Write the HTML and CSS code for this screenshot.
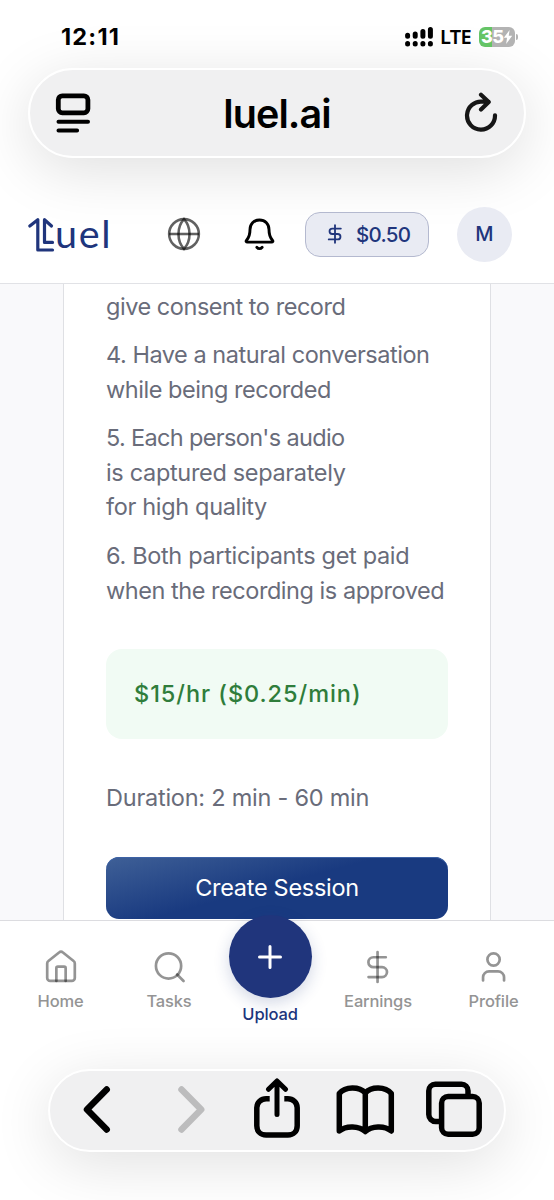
FILE: index.html
```
<!DOCTYPE html>
<html lang="en">
<head>
<meta charset="utf-8">
<title>luel.ai</title>
<link rel="stylesheet" href="styles.css">
</head>
<body>
<div class="screen">
  <div class="status">
    <span class="time">12:11</span>
    <span class="status-right">
      <svg class="signal" width="28" height="20" viewBox="405 27 28 20">
        <g stroke="#000" stroke-width="5" stroke-linecap="round"><path d="M407.6 35.3v1M415.2 34v2.3M422.9 31.6v4.7M430.4 29.5v6.8"/><path d="M407.6 43.4v.6M415.2 43.4v.6M422.9 43.4v.6M430.4 43.4v.6"/></g>
      </svg>
      <span class="lte">LTE</span>
      <span class="battery"><span class="level">35</span><svg width="10" height="14" viewBox="0 0 9 13"><path d="M6 0L.6 7.2h3L2.8 13l5.6-7.6H5.2z" fill="#fff"/></svg></span>
    </span>
  </div>

  <div class="urlbar">
    <svg width="36" height="40" viewBox="55 93 36 40" fill="none" stroke="#000" stroke-linecap="round"><rect x="58.3" y="95.8" width="29.6" height="17" rx="4" stroke-width="4.8"/><path d="M58.500 121.700h29.500M58.500 130.500h18.600" stroke-width="4"/></svg>
    <span class="url">luel.ai</span>
    <svg width="36" height="42" viewBox="463 90 36 42" fill="none" stroke="#161616" stroke-width="4.2" stroke-linecap="round" stroke-linejoin="round"><path d="M495 113.300a14 14 0 1 1-12.500-13.600h6M481 92.700l7.700 7.300-7.700 7.600"/></svg>
  </div>

  <header class="header">
    <div class="logo">
      <svg width="30" height="36" viewBox="27 215 30 36" fill="none" stroke="#20357c" stroke-width="3.200" stroke-linecap="round" stroke-linejoin="round"><path d="M29.800 225l8-6.300v30.300h14.700M44.500 241.400V218.700l7 6.300M44.500 241.400h8"/></svg><span class="wordmark">uel</span>
    </div>
    <svg class="globe" width="34" height="34" viewBox="0 0 24 24" fill="none" stroke="#000" stroke-opacity=".62" stroke-width="1.800"><circle cx="12" cy="12" r="10.500"/><path d="M1.500 12h21"/><path d="M12 1.500c5.200 5.600 5.200 15.400 0 21c-5.200-5.600-5.200-15.400 0-21z"/></svg>
    <svg class="bell" width="34" height="38" viewBox="243 215 34 38" fill="none" stroke="#000" stroke-width="2.900" stroke-linecap="round" stroke-linejoin="round"><path d="M259.500 220c-5.800 0-9.500 4.200-9.500 9.500 0 7-2 9-3.400 10.600-1 1.200-.3 2 .8 2h24.200c1.100 0 1.800-.8.8-2-1.400-1.600-3.400-3.600-3.400-10.600 0-5.300-3.700-9.500-9.500-9.500z"/><path d="M256.800 247.300c1.600 1.800 3.800 1.800 5.400 0"/></svg>
    <div class="balance">
      <svg width="20" height="20" viewBox="0 0 24 24" fill="none" stroke="#20357c" stroke-width="2.200" stroke-linecap="round" stroke-linejoin="round"><path d="M12 1.500v21M19 5.500H8.700a3.250 3.250 0 0 0 0 6.500h6.600a3.250 3.250 0 0 1 0 6.500H4.500"/></svg>
      <span>$0.50</span>
    </div>
    <div class="avatar">M</div>
  </header>

  <main class="main">
    <section class="card">
      <ol class="steps">
        <li>give consent to record</li>
        <li>4. Have a natural conversation<br>while being recorded</li>
        <li><span class="tight">5. Each person's audio</span><br><span class="loose">is captured separately<br>for high quality</span></li>
        <li><span class="loose">6. Both participants get paid</span><br>when the recording is approved</li>
      </ol>
      <div class="price">$15/hr ($0.25/min)</div>
      <p class="duration">Duration: 2 min - 60 min</p>
      <button class="create">Create Session</button>
    </section>
  </main>

  <nav class="nav">
    <a class="tab"><svg width="36" height="36" viewBox="0 0 24 24"><path d="M2.800 9.600v9.700a2 2 0 0 0 2 2h14.400a2 2 0 0 0 2-2V9.600a2 2 0 0 0-.8-1.600l-7.100-5.700a2 2 0 0 0-2.600 0L3.600 8a2 2 0 0 0-.8 1.600z"/><path d="M8.900 21.300v-8.500a1 1 0 0 1 1-1h4.200a1 1 0 0 1 1 1v8.500"/></svg><span>Home</span></a>
    <a class="tab"><svg width="36" height="36" viewBox="0 0 24 24"><circle cx="11.700" cy="11.300" r="8.400"/><path d="M17.400 17l4.300 4.300"/></svg><span>Tasks</span></a>
    <a class="tab upload"><span class="fab"><svg width="26" height="26" viewBox="0 0 26 26"><path d="M13 2.500v21M2.500 13h21"/></svg></span><span>Upload</span></a>
    <a class="tab"><svg width="36" height="36" viewBox="0 0 24 24"><path d="M11.700 2v20"/><path d="M17.200 5.500H8.900a3.300 3.300 0 0 0 0 6.600h5.800a3.300 3.300 0 0 1 0 6.600H5.700"/></svg><span>Earnings</span></a>
    <a class="tab"><svg width="36" height="36" viewBox="0 0 24 24"><circle cx="11.700" cy="7" r="4.100"/><path d="M4.700 21v-2.100a4 4 0 0 1 4-4h6a4 4 0 0 1 4 4V21"/></svg><span>Profile</span></a>
  </nav>

  <div class="toolbar">
    <svg width="60" height="60" viewBox="67 1079 60 60"><path d="M106.700 1089.500L87 1109.500l19.700 20" stroke-width="6.500"/></svg>
    <svg class="forward" width="60" height="60" viewBox="161 1079 60 60"><path d="M181.500 1089.500l19.700 20-19.700 20" stroke-width="6.500"/></svg>
    <svg class="share" width="60" height="62" viewBox="247 1077 60 62"><path d="M269.700 1097.700h-3.500c-5 0-9.400 3.800-9.400 9v18c0 5.500 3.800 9.300 9.300 9.300h21.800c5.500 0 9.300-3.800 9.300-9.300v-18c0-5.200-4.400-9-9.400-9h-3.500" stroke-width="5.500" stroke-linecap="butt"/><path d="M277 1113.500v-33M268.500 1088.300l8.500-8.300 8.500 8.300" stroke-width="5"/></svg>
    <svg class="book" width="60" height="60" viewBox="335 1079 60 60"><path d="M365.300 1093c-6-6.800-20-6.800-26 .5v37.500c7-6 20-5 26 .5 6-5.500 19-6.500 26-.5v-37.500c-6-7.300-20-7.300-26-.5zM365.300 1093v38" stroke-width="5.500"/></svg>
    <svg class="tabs" width="60" height="60" viewBox="424 1079 60 60"><path d="M440 1121.500h-4.200a7 7 0 0 1-7-7v-23.700a6.500 6.500 0 0 1 6.500-6.500h26.200a6.500 6.500 0 0 1 6.500 6.500v4" stroke-width="5.500" stroke-linecap="butt"/><rect x="441.600" y="1096.600" width="37.600" height="37.600" rx="6.500" stroke-width="5.500"/></svg>
  </div>
</div>
</body>
</html>
```
FILE: styles.css
```
* { box-sizing: border-box; }
body { margin: 0; background: #fff; font-family: Inter, "Liberation Sans", sans-serif; }
svg { display: block; flex: none; }
.screen { width: 554px; height: 1200px; overflow: hidden; display: flex; flex-direction: column; background: #fff; }

.status { height: 68px; padding: 5px 39px 0 61px; display: flex; align-items: center; justify-content: space-between; flex: none; }
.time { font-size: 23.5px; font-weight: 700; letter-spacing: 1.2px; }
.status-right { display: flex; align-items: center; }
.lte { font-family: "Noto Sans", sans-serif; font-size: 20px; font-weight: 600; letter-spacing: -.7px; margin: 0 8px 0 7px; line-height: 20px; }
.battery { position: relative; width: 36px; height: 20px; border-radius: 6px; background: linear-gradient(90deg, #65c466 13px, #b3b3b3 13px); display: flex; align-items: center; padding-left: 2px; color: #fff; }
.battery::after { content: ""; position: absolute; left: 37px; top: 7px; width: 2px; height: 6px; border-radius: 0 2px 2px 0; background: #b3b3b3; }
.level { font-size: 18px; font-weight: 800; letter-spacing: -.6px; line-height: 20px; }

.urlbar { flex: none; height: 90px; margin: 0 28px; border: 2px solid #fff; border-radius: 45px; background: #f0f0f1; box-shadow: 0 12px 60px rgba(0,0,0,.13); display: flex; align-items: center; justify-content: space-between; padding: 0 25px 1px; }
.url { font-size: 39.5px; font-weight: 600; letter-spacing: -.9px; padding-top: 2px; }

.header { flex: none; height: 126px; padding: 27px 42px 0 27px; border-bottom: 1px solid #e1e2e6; display: flex; align-items: center; }
.logo { display: flex; align-items: center; width: 84px; margin-right: 56px; height: 36px; color: #20357c; }
.wordmark { font-family: Lato, sans-serif; font-size: 39.5px; line-height: 36px; letter-spacing: 1.7px; margin: -2px 0 0 -2px; }
.bell { margin-left: 42px; }
.balance { width: 124px; height: 45px; margin-left: 28px; border: 1px solid #b4b9cf; border-radius: 15px; background: #e9ebf3; display: flex; align-items: center; gap: 11px; padding-left: 19px; color: #20357c; font-size: 20.5px; font-weight: 500; letter-spacing: -.7px; }
.avatar { width: 55px; height: 55px; margin-left: 28px; border-radius: 50%; background: #e9ebf3; color: #20357c; display: flex; align-items: center; justify-content: center; font-size: 20px; font-weight: 500; }

.main { flex: none; height: 636px; background: #f9f9fb; padding: 0 63px; overflow: hidden; }
.card { height: 640px; border: solid #dfe0e4; border-width: 0 1px; background: #fff; padding: 5.500px 42px 0; color: #696c7a; font-size: 23.5px; letter-spacing: -.46px; }
.steps { list-style: none; margin: 0; padding: 0; display: flex; flex-direction: column; gap: 14px; line-height: 34.6px; white-space: nowrap; }
.tight { letter-spacing: -.66px; }
.loose { letter-spacing: -.33px; }
.price { height: 90px; margin-top: 41px; border-radius: 16px; background: #f1fbf4; color: #2f7d3b; font-weight: 500; line-height: 90px; padding-left: 28px; letter-spacing: .95px; }
.duration { margin: 42px 0 0; line-height: 34px; letter-spacing: -.24px; }
.create { display: block; width: 342px; height: 62px; margin: 41.500px 0 0; padding: 0; border: 0; border-radius: 13px; background: linear-gradient(165deg, #3f6097 0%, #193a80 48%, #193a80 100%); box-shadow: inset 0 1px 0 #3d62a5; color: #fff; font: inherit; letter-spacing: -.3px; }

.nav { flex: none; height: 149px; border-top: 1px solid #dcdce0; display: grid; grid-template-columns: 121px 96px 106px 110px 121px; }
.tab { display: flex; flex-direction: column; align-items: center; padding-top: 28px; color: #949494; font-size: 16.5px; font-weight: 500; line-height: 22px; letter-spacing: -.15px; }
.tab svg { fill: none; stroke: #000; stroke-opacity: .42; stroke-width: 1.800; stroke-linecap: round; stroke-linejoin: round; margin-bottom: 5px; }
.upload { padding-top: 0; margin-top: -6px; color: #20357c; }
.fab { width: 83px; height: 83px; border-radius: 50%; background: #20357c; display: flex; align-items: center; justify-content: center; margin-bottom: 5px; box-shadow: 0 5px 16px rgba(32,53,124,.2); position: relative; }
.fab svg { stroke: #fff; stroke-opacity: 1; stroke-width: 3; margin: 0; }

.toolbar { flex: none; height: 83px; margin: 0 48px; padding: 0 0 3px 17px; border: 2px solid #fff; border-radius: 42px; background: #f0f0f1; box-shadow: 0 12px 60px rgba(0,0,0,.12); display: flex; align-items: center; }
.toolbar svg { fill: none; stroke: #000; stroke-linecap: round; stroke-linejoin: round; }
.toolbar .forward { margin-left: 34px; stroke: #bcbcbd; }
.share { margin-left: 26px; }
.book { margin-left: 28px; }
.tabs { margin-left: 29px; }
```
